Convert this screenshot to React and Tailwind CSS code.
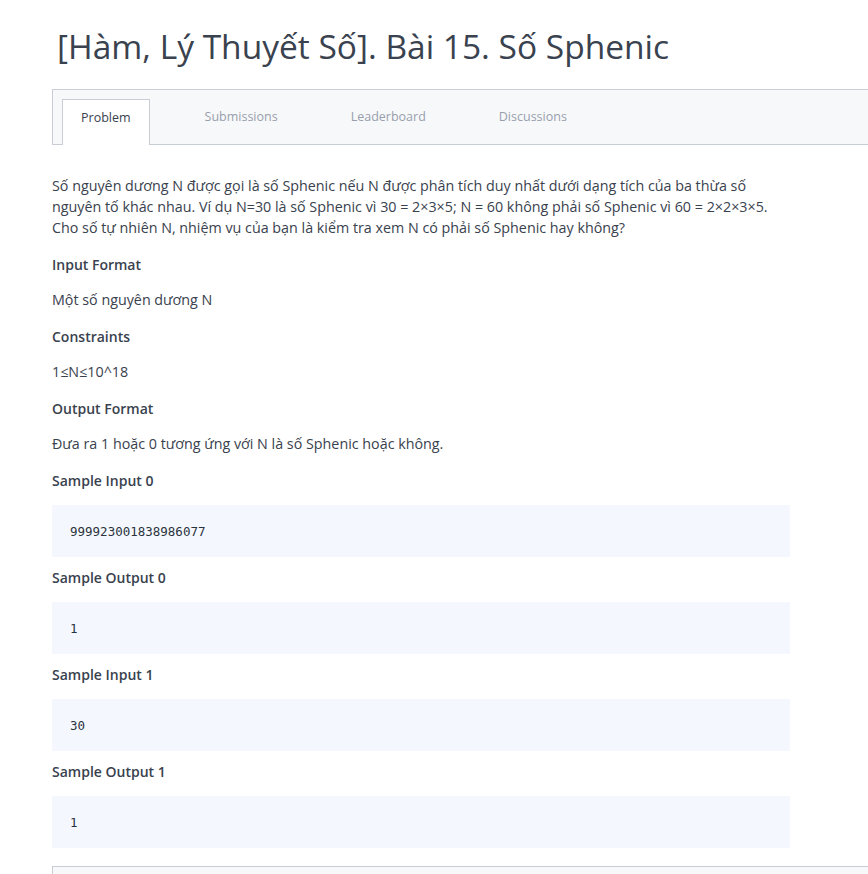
import React from 'react';

const sections = [
  { title: 'Input Format', text: 'Một số nguyên dương N' },
  { title: 'Constraints', text: '1≤N≤10^18' },
  { title: 'Output Format', text: 'Đưa ra 1 hoặc 0 tương ứng với N là số Sphenic hoặc không.' },
];

const samples = [
  { title: 'Sample Input 0', code: '999923001838986077' },
  { title: 'Sample Output 0', code: '1' },
  { title: 'Sample Input 1', code: '30' },
  { title: 'Sample Output 1', code: '1' },
];

export default function App() {
  return (
    <div className="min-h-screen overflow-hidden bg-white text-[#39424e] font-['Open_Sans',sans-serif]">
      <h1 className="pl-[57px] pt-[22px] text-[33.5px] leading-[48px] text-[#39424e]">
        [Hàm, Lý Thuyết Số]. Bài 15. Số Sphenic
      </h1>

      {/* tab bar */}
      <div className="ml-[52px] mt-[19px] w-[900px] h-[56px] border border-[#c9ced6] bg-[#f7f8fa] flex items-end pl-[9px] gap-[37px] text-[12.5px]">
        <div className="h-[46px] -mb-px px-[18px] bg-white border border-b-0 border-[#c9ced6] flex items-center pb-[8px] text-[#39424e]">
          Problem
        </div>
        <div className="h-[46px] px-[18px] flex items-center pb-[8px] text-[#979fad]">Submissions</div>
        <div className="h-[46px] px-[18px] flex items-center pb-[8px] text-[#979fad]">Leaderboard</div>
        <div className="h-[46px] px-[18px] flex items-center pb-[8px] text-[#979fad]">Discussions</div>
      </div>

      <div className="ml-[52px] w-[738px] pt-[30px] text-[14.3px] leading-[21px]">
        <p className="mb-[16px]">
          Số nguyên dương N được gọi là số Sphenic nếu N được phân tích duy nhất dưới dạng tích của ba thừa số nguyên tố khác nhau. Ví dụ N=30 là số Sphenic vì 30 = 2×3×5; N = 60 không phải số Sphenic vì 60 = 2×2×3×5. Cho số tự nhiên N, nhiệm vụ của bạn là kiểm tra xem N có phải số Sphenic hay không?
        </p>
        {sections.map((s) => (
          <div key={s.title}>
            <h3 className="font-semibold text-[14px] mb-[14px]">{s.title}</h3>
            <p className="mb-[16px]">{s.text}</p>
          </div>
        ))}
        {samples.map((s) => (
          <div key={s.title} className="mb-[10px]">
            <h3 className="font-semibold text-[14px] mb-[14px]">{s.title}</h3>
            <pre className="h-[52px] bg-[#f4f8fe] pl-[18px] flex items-center font-['DejaVu_Sans_Mono',monospace] text-[12.5px] text-[#2a323c]">
              {s.code}
            </pre>
          </div>
        ))}
      </div>

      <div className="ml-[52px] mt-[18px] w-[900px] h-[40px] border border-[#c9ced6] bg-[#f7f8fa]" />
    </div>
  );
}
